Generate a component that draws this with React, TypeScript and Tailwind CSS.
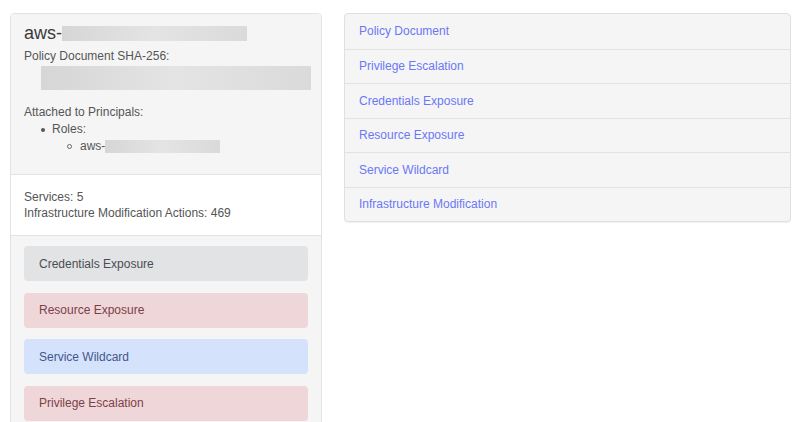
const links = [
  'Policy Document',
  'Privilege Escalation',
  'Credentials Exposure',
  'Resource Exposure',
  'Service Wildcard',
  'Infrastructure Modification',
];

const badges = [
  { label: 'Credentials Exposure', cls: 'bg-[#e2e3e5] text-[#4a4d52]' },
  { label: 'Resource Exposure', cls: 'bg-[#efd6d9] text-[#7a4248]' },
  { label: 'Service Wildcard', cls: 'bg-[#d4e3fb] text-[#44558c]' },
  { label: 'Privilege Escalation', cls: 'bg-[#efd6d9] text-[#7a4248]' },
];

function Redacted({ className }: { className: string }) {
  return (
    <span
      className={`inline-block bg-gradient-to-r from-[#d6d6d6] via-[#e4e4e4] to-[#dadada] blur-[0.5px] ${className}`}
    />
  );
}

export default function App() {
  return (
    <div
      className="w-[800px] h-[422px] overflow-hidden bg-white flex items-start gap-[22px] pl-[10px] pt-[13px] text-[12px] text-[#555]"
      style={{ fontFamily: '"Liberation Sans", Arial, sans-serif' }}
    >
      {/* Policy card */}
      <div className="w-[312px] shrink-0 rounded-[4px] border border-[#e3e3e3] overflow-hidden">
        <div className="bg-[#f5f5f5] px-[13px] pt-[9px] pb-[19px]">
          <div className="flex items-center text-[18px] leading-[21px] text-[#3a3a3a]">
            aws-<Redacted className="w-[185px] h-[15px]" />
          </div>
          <div className="mt-[4px] leading-[17px]">Policy Document SHA-256:</div>
          <Redacted className="block ml-[17px] mt-[1px] w-[270px] h-[24px]" />
          <div className="mt-[9px] leading-[17px]">Attached to Principals:</div>
          <ul className="leading-[17px]">
            <li className="flex items-center pl-[17px]">
              <span className="w-[4px] h-[4px] rounded-full bg-[#555] mr-[7px]" />
              Roles:
            </li>
            <li className="flex items-center pl-[43px]">
              <span className="w-[5px] h-[5px] rounded-full border border-[#666] mr-[8px]" />
              aws-<Redacted className="w-[115px] h-[13px]" />
            </li>
          </ul>
        </div>
        <div className="bg-white border-t border-[#e3e3e3] px-[13px] pt-[14px] pb-[14px] leading-[16px]">
          <div>Services: 5</div>
          <div>Infrastructure Modification Actions: 469</div>
        </div>
        <div className="bg-[#f5f5f5] border-t border-[#e3e3e3] px-[13px] pt-[10px] pb-[12px] flex flex-col gap-[11.5px]">
          {badges.map((b) => (
            <div
              key={b.label}
              className={`h-[35px] rounded-[4px] flex items-center pl-[15px] ${b.cls}`}
            >
              {b.label}
            </div>
          ))}
        </div>
      </div>

      {/* Section links */}
      <div className="w-[447px] shrink-0 rounded-[4px] border border-[#e0e0e0] bg-[#f5f5f5] shadow-[0_1px_1px_rgba(0,0,0,0.06)]">
        {links.map((l, i) => (
          <div
            key={l}
            className={`h-[34.5px] flex items-center pl-[14px] text-[#6b78f6] ${i > 0 ? 'border-t border-[#e2e2e2]' : ''}`}
          >
            {l}
          </div>
        ))}
      </div>
    </div>
  );
}
